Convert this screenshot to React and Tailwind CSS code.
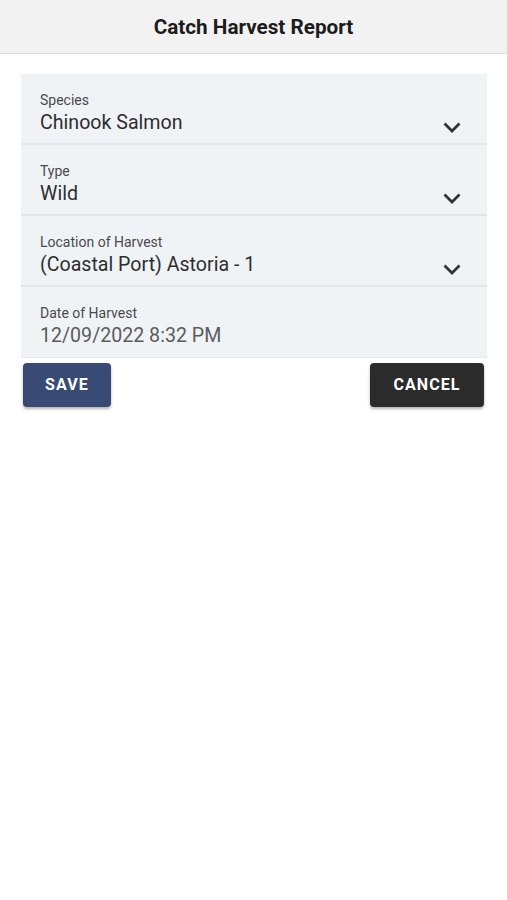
import React from "react"

const fields = [
  { label: "Species", value: "Chinook Salmon", select: true },
  { label: "Type", value: "Wild", select: true },
  { label: "Location of Harvest", value: "(Coastal Port) Astoria - 1", select: true },
  { label: "Date of Harvest", value: "12/09/2022 8:32 PM", select: false },
]

const Chevron = () => (
  <svg className="w-[24px] h-[24px] text-[#333]" fill="none" stroke="currentColor" strokeWidth="2.8" viewBox="0 0 24 24">
    <polyline points="4.5 8.5 12 16 19.5 8.5" />
  </svg>
)

const App = () => {
  return (
    <div className="min-h-screen bg-white font-['Roboto',sans-serif]">
      {/* Header */}
      <div className="h-[54px] bg-[#f2f2f2] border-b border-[#dcdcdc] flex items-center justify-center">
        <h1 className="text-[20.7px] font-bold text-[#1c1c1c] pt-[2px]">Catch Harvest Report</h1>
      </div>

      <div className="px-[21px] pt-[20px]">
        <div className="bg-[#eff3f6] mr-[-1px]">
          {fields.map((f, i) => (
            <div
              key={f.label}
              className={`h-[71px] pl-[19px] pr-[23px] pt-[17px] flex items-start justify-between ${
                i < fields.length - 1 ? "border-b-2 border-[#e2e6e9]" : "border-b border-[#e6eaed]"
              }`}
            >
              <div className="flex flex-col">
                <span className="text-[14px] leading-[18px] text-[#4a4a4a]">{f.label}</span>
                <span className={`text-[19.6px] leading-[24px] mt-[2px] ${f.select ? "text-[#2e2e2e]" : "text-[#5c5c5c]"}`}>
                  {f.value}
                </span>
              </div>
              {f.select && (
                <div className="mt-[24px]">
                  <Chevron />
                </div>
              )}
            </div>
          ))}
        </div>

        <div className="flex justify-between mt-[5px] px-[2px]">
          <button className="h-[44px] w-[88px] rounded-[4px] bg-[#394b74] text-white text-[16px] font-bold tracking-[1.1px] shadow-[0_2px_3px_rgba(0,0,0,0.3)]">
            SAVE
          </button>
          <button className="h-[44px] w-[114px] rounded-[4px] bg-[#2b2b2b] text-white text-[16px] font-bold tracking-[1.1px] shadow-[0_2px_3px_rgba(0,0,0,0.3)]">
            CANCEL
          </button>
        </div>
      </div>
    </div>
  )
}

export default App
